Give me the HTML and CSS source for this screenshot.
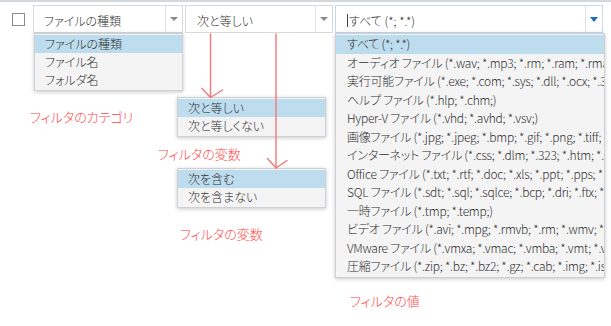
FILE: index.html
```html
<!DOCTYPE html>
<html lang="ja">
<head>
<meta charset="utf-8">
<link rel="stylesheet" href="styles.css">
</head>
<body>
<div class="page">
  <div class="topline"></div>
  <div class="filter-row">
    <div class="check-col"><span class="checkbox"></span></div>

    <div class="col col-cat">
      <div class="combo"><span class="combo-text">ファイルの種類</span><span class="combo-arrow"><i class="tri"></i></span></div>
      <ul class="dropdown dd-cat">
        <li class="sel">ファイルの種類</li>
        <li>ファイル名</li>
        <li>フォルダ名</li>
      </ul>
      <p class="note note-cat">フィルタのカテゴリ</p>
    </div>

    <div class="col col-op">
      <div class="combo"><span class="combo-text">次と等しい</span><span class="combo-arrow"><i class="tri"></i></span></div>
      <ul class="dropdown dd-op1">
        <li class="sel">次と等しい</li>
        <li>次と等しくない</li>
      </ul>
      <p class="note note-op1">フィルタの変数</p>
      <ul class="dropdown dd-op2">
        <li class="sel">次を含む</li>
        <li>次を含まない</li>
      </ul>
      <p class="note note-op2">フィルタの変数</p>
    </div>

    <div class="col col-val">
      <div class="combo combo-focus"><span class="combo-text"><span class="caret"></span>すべて (*; *.*)</span><span class="combo-arrow"><i class="tri tri-blue"></i></span></div>
      <ul class="dropdown dd-val">
        <li class="sel">すべて (*; *.*)</li>
        <li>オーディオ ファイル (*.wav; *.mp3; *.rm; *.ram; *.rma; *</li>
        <li>実行可能ファイル (*.exe; *.com; *.sys; *.dll; *.ocx; *.3</li>
        <li>ヘルプ ファイル (*.hlp; *.chm;)</li>
        <li>Hyper-V ファイル (*.vhd; *.avhd; *.vsv;)</li>
        <li>画像ファイル (*.jpg; *.jpeg; *.bmp; *.gif; *.png; *.tiff; *.</li>
        <li>インターネット ファイル (*.css; *.dlm; *.323; *.htm; *.htm</li>
        <li>Office ファイル (*.txt; *.rtf; *.doc; *.xls; *.ppt; *.pps; *</li>
        <li>SQL ファイル (*.sdt; *.sql; *.sqlce; *.bcp; *.dri; *.ftx; *</li>
        <li>一時ファイル (*.tmp; *.temp;)</li>
        <li>ビデオ ファイル (*.avi; *.mpg; *.rmvb; *.rm; *.wmv; *.wm</li>
        <li>VMware ファイル (*.vmxa; *.vmac; *.vmba; *.vmt; *.vm</li>
        <li>圧縮ファイル (*.zip; *.bz; *.bz2; *.gz; *.cab; *.img; *.is</li>
      </ul>
      <p class="note note-val">フィルタの値</p>
    </div>
  </div>

  <svg class="arrows" width="611" height="326" viewBox="0 0 611 326">
    <g fill="none" stroke="#f27777" stroke-width="1.4" stroke-linecap="round" stroke-linejoin="round">
      <path d="M210.5 34 V97.5"/>
      <path d="M202 88.5 L210.5 97.5 L222.5 90"/>
      <path d="M276 34 V168"/>
      <path d="M267.5 158.5 L276 168 L287 160.5"/>
    </g>
  </svg>
</div>
</body>
</html>
```

FILE: styles.css
```css
* { box-sizing: border-box; }

html, body {
  margin: 0;
  padding: 0;
  background: #ffffff;
}

body {
  font-family: "Noto Sans CJK JP", "Noto Sans", sans-serif;
  font-feature-settings: "palt" 1;
  font-size: 12px;
  font-weight: 300;
  color: #303030;
}

.page {
  position: relative;
  width: 611px;
  height: 326px;
  overflow: hidden;
}

.topline {
  height: 2px;
  background: #d3d8dd;
}

.filter-row {
  display: flex;
  align-items: flex-start;
  gap: 2px;
  margin-top: 3px;
}

.check-col {
  width: 31px;
  padding-left: 12px;
  padding-top: 8px;
}

.checkbox {
  display: block;
  width: 13px;
  height: 13px;
  border: 1px solid #8c8c8c;
  background: #fff;
}

.col {
  display: flex;
  flex-direction: column;
}

.col-cat { width: 150px; }
.col-op { width: 148px; }
.col-val { width: 268px; }

.combo {
  display: flex;
  height: 28px;
  border: 1px solid #d9d9d9;
  background: #fff;
}

.combo-focus {
  border-color: #c2dbef;
}

.combo-text {
  flex: 1;
  display: flex;
  align-items: center;
  padding-left: 10px;
  padding-top: 2px;
  white-space: nowrap;
  overflow: hidden;
}

.col-op .combo-text,
.col-val .combo-text {
  padding-left: 11px;
}

.caret {
  display: inline-block;
  width: 1px;
  height: 13px;
  background: #444;
  margin-right: 1px;
}

.combo-arrow {
  width: 17px;
  border-left: 1px solid #e3e3e3;
  display: flex;
  align-items: center;
  justify-content: center;
}

.tri {
  display: block;
  width: 0;
  height: 0;
  border-left: 4px solid transparent;
  border-right: 4px solid transparent;
  border-top: 4px solid #8a8a8a;
}

.tri-blue {
  border-left-width: 4.5px;
  border-right-width: 4.5px;
  border-top: 5px solid #1b6cc0;
}

.dropdown {
  list-style: none;
  margin: 0;
  padding: 1px 0;
  background: #f4f4f4;
  border: 1px solid #cdd1d5;
  box-shadow: 0 1px 4px rgba(0, 0, 0, 0.22);
}

.dropdown li {
  height: 18px;
  line-height: 18px;
  padding-left: 10px;
  white-space: nowrap;
  overflow: hidden;
}

.dropdown li.sel {
  background: #bddcee;
}

.dd-cat {
  margin-top: 0;
  margin-left: 1px;
  width: 149px;
}

.dd-op1 {
  margin-top: 64px;
  margin-left: -8px;
  width: 149px;
}

.dd-op2 {
  margin-top: 5px;
  margin-left: -8px;
  width: 149px;
}

.dd-val {
  margin-top: 0;
  width: 270px;
}

.dd-val li {
  height: 18.5px;
  line-height: 18.5px;
  padding-left: 11px;
  letter-spacing: -0.25px;
}

.note {
  margin: 0;
  font-size: 13px;
  line-height: 18px;
  color: #ff4747;
  white-space: nowrap;
}

.note-cat {
  margin-top: 17px;
  margin-left: -3px;
}

.note-op1 {
  margin-top: 8px;
  margin-left: -27px;
}

.note-op2 {
  margin-top: 17px;
  margin-left: -5px;
}

.note-val {
  margin-top: 14px;
  margin-left: 15px;
}

.arrows {
  position: absolute;
  left: 0;
  top: 0;
  pointer-events: none;
}
```
